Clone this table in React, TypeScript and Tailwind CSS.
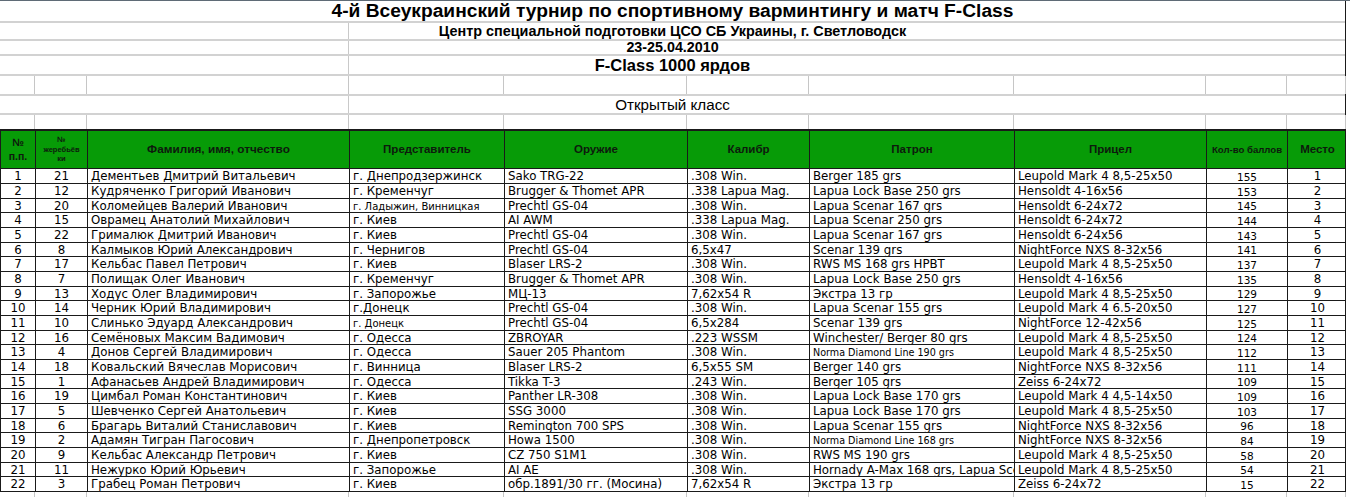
const COLS = 'grid grid-cols-[35px_52px_262px_155px_183px_122px_205px_192px_81px_59px]';

type Row = [number, number, string, string, string, string, string, string, number, number];

const ROWS: Row[] = [
  [1, 21, 'Дементьев Дмитрий Витальевич', 'г. Днепродзержинск', 'Sako TRG-22', '.308 Win.', 'Berger 185 grs', 'Leupold Mark 4 8,5-25x50', 155, 1],
  [2, 12, 'Кудряченко Григорий Иванович', 'г. Кременчуг', 'Brugger & Thomet APR', '.338 Lapua Mag.', 'Lapua Lock Base 250 grs', 'Hensoldt 4-16x56', 153, 2],
  [3, 20, 'Коломейцев Валерий Иванович', 'г. Ладыжин, Винницкая', 'Prechtl GS-04', '.308 Win.', 'Lapua Scenar 167 grs', 'Hensoldt 6-24x72', 145, 3],
  [4, 15, 'Оврамец Анатолий Михайлович', 'г. Киев', 'AI AWM', '.338 Lapua Mag.', 'Lapua Scenar 250 grs', 'Hensoldt 6-24x72', 144, 4],
  [5, 22, 'Грималюк Дмитрий Иванович', 'г. Киев', 'Prechtl GS-04', '.308 Win.', 'Lapua Scenar 167 grs', 'Hensoldt 6-24x56', 143, 5],
  [6, 8, 'Калмыков Юрий Александрович', 'г. Чернигов', 'Prechtl GS-04', '6,5x47', 'Scenar 139 grs', 'NightForce NXS 8-32x56', 141, 6],
  [7, 17, 'Кельбас Павел Петрович', 'г. Киев', 'Blaser LRS-2', '.308 Win.', 'RWS MS 168 grs HPBT', 'Leupold Mark 4 8,5-25x50', 137, 7],
  [8, 7, 'Полищак Олег Иванович', 'г. Кременчуг', 'Brugger & Thomet APR', '.308 Win.', 'Lapua Lock Base 250 grs', 'Hensoldt 4-16x56', 135, 8],
  [9, 13, 'Ходус Олег Владимирович', 'г. Запорожье', 'МЦ-13', '7,62x54 R', 'Экстра 13 гр', 'Leupold Mark 4 8,5-25x50', 129, 9],
  [10, 14, 'Черник Юрий Владимирович', 'г.Донецк', 'Prechtl GS-04', '.308 Win.', 'Lapua Scenar 155 grs', 'Leupold Mark 4 6.5-20x50', 127, 10],
  [11, 10, 'Слинько Эдуард Александрович', 'г. Донецк', 'Prechtl GS-04', '6,5x284', 'Scenar 139 grs', 'NightForce 12-42x56', 125, 11],
  [12, 16, 'Семёновых Максим Вадимович', 'г. Одесса', 'ZBROYAR', '.223 WSSM', 'Winchester/ Berger 80 grs', 'Leupold Mark 4 8,5-25x50', 124, 12],
  [13, 4, 'Донов Сергей Владимирович', 'г. Одесса', 'Sauer 205 Phantom', '.308 Win.', 'Norma Diamond Line 190 grs', 'Leupold Mark 4 8,5-25x50', 112, 13],
  [14, 18, 'Ковальский Вячеслав Морисович', 'г. Винница', 'Blaser LRS-2', '6,5x55 SM', 'Berger 140 grs', 'NightForce NXS 8-32x56', 111, 14],
  [15, 1, 'Афанасьев Андрей Владимирович', 'г. Одесса', 'Tikka T-3', '.243 Win.', 'Berger 105 grs', 'Zeiss 6-24x72', 109, 15],
  [16, 19, 'Цимбал Роман Константинович', 'г. Киев', 'Panther LR-308', '.308 Win.', 'Lapua Lock Base 170 grs', 'Leupold Mark 4 4,5-14x50', 109, 16],
  [17, 5, 'Шевченко Сергей Анатольевич', 'г. Киев', 'SSG 3000', '.308 Win.', 'Lapua Lock Base 170 grs', 'Leupold Mark 4 8,5-25x50', 103, 17],
  [18, 6, 'Брагарь Виталий Станиславович', 'г. Киев', 'Remington 700 SPS', '.308 Win.', 'Lapua Scenar 155 grs', 'NightForce NXS 8-32x56', 96, 18],
  [19, 2, 'Адамян Тигран Пагосович', 'г. Днепропетровск', 'Howa 1500', '.308 Win.', 'Norma Diamond Line 168 grs', 'NightForce NXS 8-32x56', 84, 19],
  [20, 9, 'Кельбас Александр Петрович', 'г. Киев', 'CZ 750 S1M1', '.308 Win.', 'RWS MS 190 grs', 'Leupold Mark 4 8,5-25x50', 58, 20],
  [21, 11, 'Нежурко Юрий Юрьевич', 'г. Запорожье', 'AI AE', '.308 Win.', 'Hornady A-Max 168 grs, Lapua Scenar 155 grs', 'Leupold Mark 4 8,5-25x50', 54, 21],
  [22, 3, 'Грабец Роман Петрович', 'г. Киев', 'обр.1891/30 гг. (Мосина)', '7,62x54 R', 'Экстра 13 гр', 'Zeiss 6-24x72', 15, 22],
];

// cells typed in a smaller font in the sheet: "row-col"
const SMALL = new Set(['3-3', '11-3', '13-6', '19-6']);

const SPLIT = 'bg-[linear-gradient(to_right,transparent_348px,#c9c9c9_348px,#c9c9c9_349px,transparent_349px)]';

function GridRow({ h }: { h: string }) {
  return (
    <div className={`${COLS} ${h} border-b-2 border-[#d2d2d2]`}>
      {Array.from({ length: 10 }).map((_, i) => (
        <div key={i} className="border-r border-[#c6c6c6]" />
      ))}
    </div>
  );
}

function Head({ children, className = '' }: { children: React.ReactNode; className?: string }) {
  return (
    <div className={`border-r border-[#1a1a1a] flex items-center justify-center text-center font-bold text-[#0d1a0d] leading-tight ${className}`}>
      {children}
    </div>
  );
}

export default function App() {
  return (
    <div className="w-[1350px] h-[497px] overflow-hidden bg-white border-t border-[#5f6b76] text-black font-['Liberation_Sans',Arial,sans-serif]">
      <div className="w-[1346px] border-r border-[#1a1a1a]">
        <div className="h-[22px] border-b-2 border-[#d2d2d2] flex items-center justify-center font-bold text-[19.2px] leading-none">
          4-й Всеукраинский турнир по спортивному варминтингу и матч F-Class
        </div>
        <div className={`h-[18px] border-b-2 border-[#d2d2d2] flex items-center justify-center font-bold text-[14.4px] leading-none ${SPLIT}`}>
          Центр специальной подготовки ЦСО СБ Украины, г. Светловодск
        </div>
        <div className={`h-[15px] border-b-2 border-[#d2d2d2] flex items-end justify-center font-bold text-[14.3px] leading-none ${SPLIT}`}>
          23-25.04.2010
        </div>
        <div className={`h-[20px] border-b-2 border-[#d2d2d2] flex items-center justify-center font-bold text-[16.5px] leading-none ${SPLIT}`}>
          F-Class 1000 ярдов
        </div>
        <GridRow h="h-[20px]" />
        <div className={`h-[19px] border-b-2 border-[#d2d2d2] flex items-center justify-center text-[15.2px] leading-none ${SPLIT}`}>
          Открытый класс
        </div>
        <div className={`${COLS} h-[14px]`}>
          {Array.from({ length: 10 }).map((_, i) => (
            <div key={i} className="border-r border-[#c6c6c6]" />
          ))}
        </div>

        <div className={`${COLS} h-[40px] bg-[#079b07] border-t-2 border-b border-l border-[#1a1a1a]`}>
          <Head className="text-[10.5px]">
            №<br />п.п.
          </Head>
          <Head className="text-[7.5px]">
            №<br />жеребьёв<br />ки
          </Head>
          <Head className="text-[11.8px]">Фамилия, имя, отчество</Head>
          <Head className="text-[11.5px]">Представитель</Head>
          <Head className="text-[11.5px]">Оружие</Head>
          <Head className="text-[11.5px]">Калибр</Head>
          <Head className="text-[11.5px]">Патрон</Head>
          <Head className="text-[11.5px]">Прицел</Head>
          <Head className="text-[9.6px]">Кол-во баллов</Head>
          <Head className="text-[11.5px] border-r-0">Место</Head>
        </div>

        <div className="font-['DejaVu_Sans',Verdana,sans-serif] text-[11.8px]">
          {ROWS.map((r, i) => (
            <div
              key={r[0]}
              className={`${COLS} ${i % 3 === 2 ? 'h-[14px]' : 'h-[15px]'} border-b border-l border-[#1a1a1a] leading-none`}
            >
              {r.map((v, c) => {
                const center = c < 2 || c > 7;
                const small = SMALL.has(`${r[0]}-${c}`);
                return (
                  <div
                    key={c}
                    className={`flex items-center overflow-hidden whitespace-nowrap px-[3px] pt-[2px] ${
                      c < 9 ? 'border-r border-[#1a1a1a]' : ''
                    } ${center ? 'justify-center' : ''} ${
                      small ? (c === 6 ? 'text-[9.6px]' : 'text-[10px]') : c === 8 ? 'text-[10.5px]' : ''
                    }`}
                  >
                    {v}
                  </div>
                );
              })}
            </div>
          ))}
        </div>
      </div>
      <div className="w-[1346px]">
        <GridRow h="h-[10px]" />
      </div>
    </div>
  );
}
